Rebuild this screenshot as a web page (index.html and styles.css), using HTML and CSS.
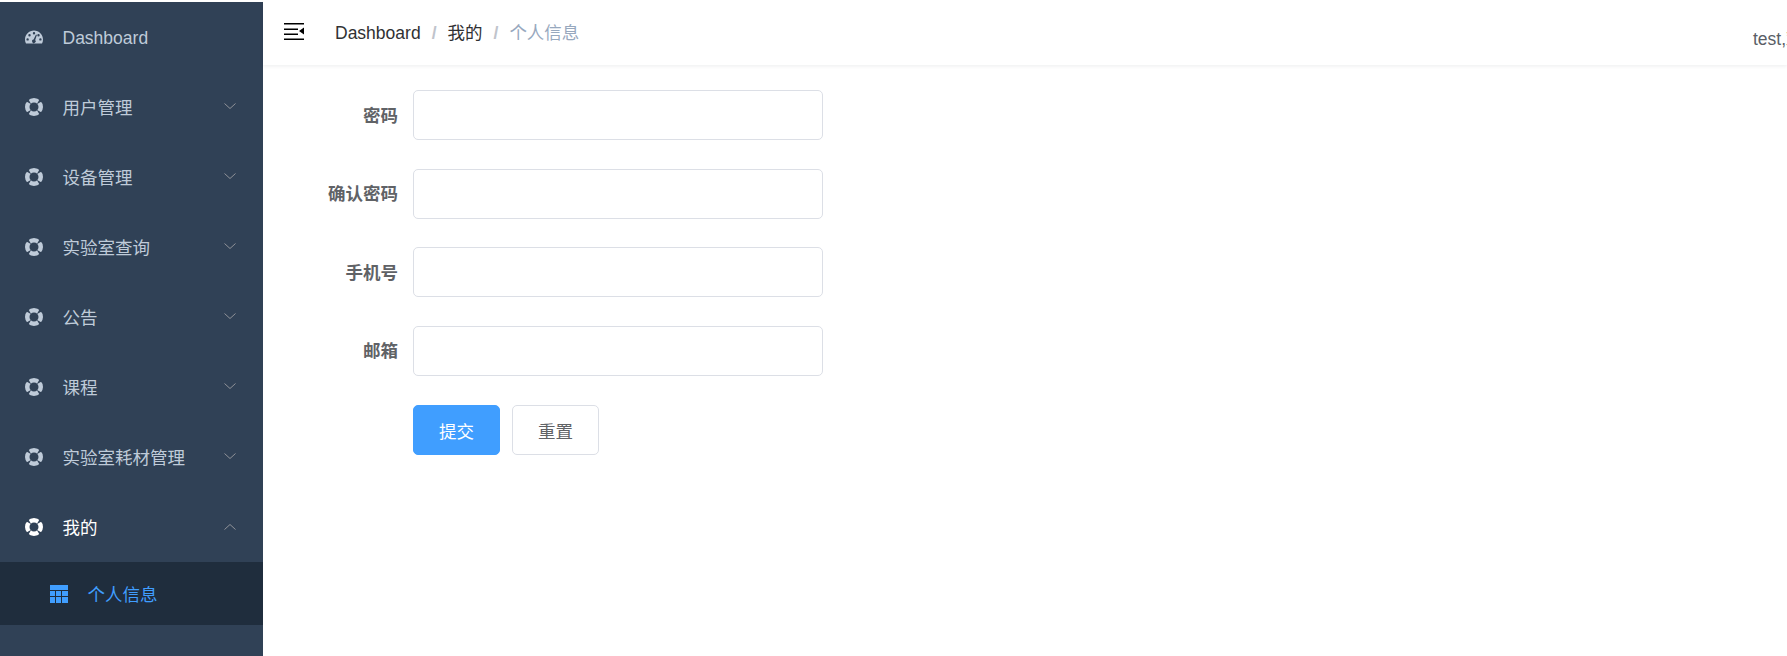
FILE: index.html
```html
<!DOCTYPE html>
<html lang="zh-CN">
<head>
  <meta charset="UTF-8" />
  <title>个人信息</title>
  <link rel="stylesheet" href="styles.css">
</head>
<body>
  <svg class="svg-defs" width="0" height="0">
    <symbol id="icon-ring" viewBox="0 0 18 18">
      <path fill="currentColor" fill-rule="evenodd" d="M9 0a9 9 0 1 0 0 18A9 9 0 0 0 9 0zm0 4.500a4.500 4.500 0 1 1 0 9 4.500 4.500 0 0 1 0-9z"/>
      <path fill="#304156" d="M6.300 6.300L1 3.200V1h2.200zM11.700 6.300L17 3.200V1h-2.200zM6.300 11.700L1 14.800V17h2.200zM11.700 11.700L17 14.800V17h-2.200z"/>
    </symbol>
    <symbol id="icon-chevron" viewBox="0 0 12 7">
      <path fill="none" stroke="currentColor" d="M.5.5L6 5.5 11.500.5"/>
    </symbol>
  </svg>

  <aside class="sidebar">
    <ul class="menu">
      <li class="menu-item menu-item-top">
        <svg class="menu-icon" viewBox="0 0 18 18">
          <path fill="currentColor" fill-rule="evenodd" d="M9 2.500C4 2.500 0 6.500 0 11.500c0 1.500.4 2.900 1 4h16c.6-1.100 1-2.500 1-4 0-5-4-9-9-9zM9 4a1.200 1.200 0 1 1 0 2.400A1.200 1.200 0 0 1 9 4zM4.500 6a1.200 1.200 0 1 1 0 2.400 1.200 1.200 0 0 1 0-2.400zm9 0a1.200 1.200 0 1 1 0 2.400 1.200 1.200 0 0 1 0-2.400zM2.600 10.200a1.200 1.200 0 1 1 0 2.400 1.200 1.200 0 0 1 0-2.400zm12.800 0a1.200 1.200 0 1 1 0 2.400 1.200 1.200 0 0 1 0-2.400zM11 6.500l.9.400-1.700 5.100a1.800 1.800 0 1 1-1.600-.5z"/>
        </svg>
        <span>Dashboard</span>
      </li>
      <li class="menu-item"><svg class="menu-icon"><use href="#icon-ring"/></svg><span>用户管理</span><svg class="chevron"><use href="#icon-chevron"/></svg></li>
      <li class="menu-item"><svg class="menu-icon"><use href="#icon-ring"/></svg><span>设备管理</span><svg class="chevron"><use href="#icon-chevron"/></svg></li>
      <li class="menu-item"><svg class="menu-icon"><use href="#icon-ring"/></svg><span>实验室查询</span><svg class="chevron"><use href="#icon-chevron"/></svg></li>
      <li class="menu-item"><svg class="menu-icon"><use href="#icon-ring"/></svg><span>公告</span><svg class="chevron"><use href="#icon-chevron"/></svg></li>
      <li class="menu-item"><svg class="menu-icon"><use href="#icon-ring"/></svg><span>课程</span><svg class="chevron"><use href="#icon-chevron"/></svg></li>
      <li class="menu-item"><svg class="menu-icon"><use href="#icon-ring"/></svg><span>实验室耗材管理</span><svg class="chevron"><use href="#icon-chevron"/></svg></li>
      <li class="menu-item menu-item-open"><svg class="menu-icon"><use href="#icon-ring"/></svg><span>我的</span><svg class="chevron chevron-up"><use href="#icon-chevron"/></svg></li>
      <li class="sub-item">
        <svg class="menu-icon" viewBox="0 0 18 18">
          <path fill="currentColor" d="M0 0h18v18H0z"/>
          <path stroke="#1f2d3d" d="M0 5.500h18M0 11.500h18M5.500 5.500V18M11.500 5.500V18"/>
        </svg>
        <span>个人信息</span>
      </li>
    </ul>
  </aside>

  <div class="main">
    <header class="navbar">
      <svg class="hamburger" viewBox="0 0 20 17">
        <path fill="#000" d="M0 0h20v1.500H0zM0 5.500h14V7H0zM0 10.500h14V12H0zM0 15.500h20V17H0zM20 4.500v7l-5-3.500z"/>
      </svg>
      <nav class="breadcrumb">
        <span>Dashboard</span>
        <i>/</i>
        <span>我的</span>
        <i>/</i>
        <span class="current">个人信息</span>
      </nav>
      <div class="user">test,欢迎您</div>
    </header>

    <form class="profile-form">
      <div class="form-row">
        <label for="password">密码</label>
        <input type="password" id="password" />
      </div>
      <div class="form-row">
        <label for="confirm">确认密码</label>
        <input type="password" id="confirm" />
      </div>
      <div class="form-row">
        <label for="phone">手机号</label>
        <input type="text" id="phone" />
      </div>
      <div class="form-row">
        <label for="email">邮箱</label>
        <input type="text" id="email" />
      </div>
      <div class="form-row form-actions">
        <button type="submit" class="btn btn-primary">提交</button>
        <button type="reset" class="btn">重置</button>
      </div>
    </form>
  </div>
</body>
</html>
```

FILE: styles.css
```css
:root {
  --sidebar: #304156;
  --sidebar-dark: #1f2d3d;
  --menu-text: #bfcbd9;
  --accent: #409eff;
  --border: #dcdfe6;
}

* {
  margin: 0;
  padding: 0;
  box-sizing: border-box;
}

html, body {
  height: 100%;
  overflow: hidden;
}

body {
  display: flex;
  background: #fff;
  font-family: "Liberation Sans", "Noto Sans CJK SC", sans-serif;
  font-size: 17.500px;
}

.svg-defs {
  position: absolute;
}

.sidebar {
  width: 263px;
  flex-shrink: 0;
  margin-top: 2px;
  background: var(--sidebar);
}

.menu {
  list-style: none;
}

.menu-item {
  display: flex;
  align-items: center;
  height: 70px;
  padding: 0 27px 0 25px;
  color: var(--menu-text);
}

.menu-item span {
  margin-top: -1px;
}

.menu-item-top span {
  margin-top: 2px;
}

.menu-item-open {
  color: #fff;
}

.menu-icon {
  width: 18px;
  height: 18px;
  margin-right: 19.500px;
  flex-shrink: 0;
}

.chevron {
  width: 12px;
  height: 7px;
  margin-left: auto;
  margin-top: -2px;
  color: #909399;
}

.chevron-up {
  transform: rotate(180deg);
}

.sub-item {
  display: flex;
  align-items: center;
  height: 63px;
  padding-left: 50px;
  background: var(--sidebar-dark);
  color: var(--accent);
}

.main {
  flex: 1;
  min-width: 0;
}

.navbar {
  display: flex;
  align-items: flex-start;
  height: 65px;
  padding-left: 21px;
  box-shadow: 0 1px 4px rgba(0, 21, 41, 0.08);
}

.hamburger {
  width: 20px;
  height: 17px;
  margin-top: 23px;
  flex-shrink: 0;
}

.breadcrumb {
  display: flex;
  gap: 11px;
  margin: 21px 0 0 31px;
  color: #303133;
  line-height: 24px;
}

.breadcrumb i {
  color: #c0c4cc;
  font-style: normal;
  font-weight: bold;
}

.breadcrumb .current {
  color: #97a8be;
}

.user {
  width: 34px;
  margin: 27px 0 0 auto;
  color: #5a5e66;
  white-space: nowrap;
  line-height: 24px;
}

.profile-form {
  padding-top: 25px;
}

.form-row {
  display: flex;
  align-items: center;
  height: 50px;
  margin-bottom: 28.500px;
  padding-left: 150px;
}

.form-row label {
  width: 135px;
  margin: -2px 15px 0 -150px;
  color: #606266;
  font-weight: bold;
  text-align: right;
}

.form-row input {
  width: 410px;
  height: 50px;
  border: 1px solid var(--border);
  border-radius: 5px;
}

.form-actions {
  margin-top: 29.500px;
}

.btn {
  width: 87px;
  height: 49.500px;
  margin-right: 12px;
  border: 1px solid var(--border);
  border-radius: 5px;
  background: #fff;
  color: #606266;
  font: inherit;
}

.btn-primary {
  border-color: var(--accent);
  background: var(--accent);
  color: #fff;
}
```
